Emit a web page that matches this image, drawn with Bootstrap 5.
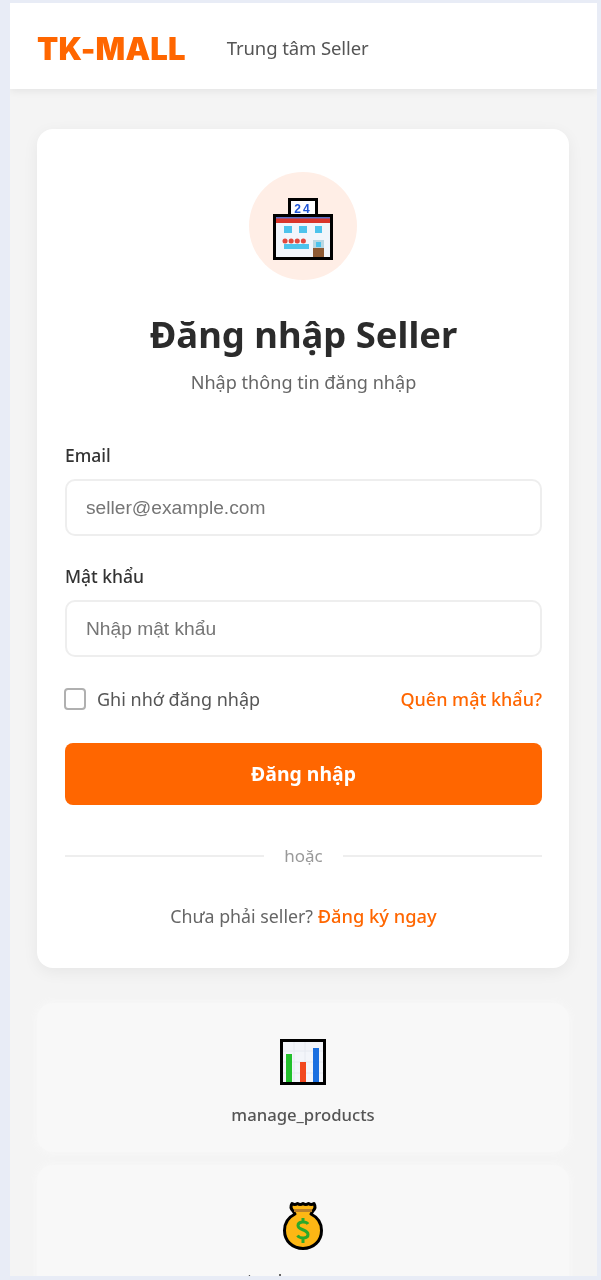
<!DOCTYPE html>
<html lang="vi">
<head>
<meta charset="utf-8">
<title>TK-MALL</title>
<link href="https://cdn.jsdelivr.net/npm/bootstrap@5.3.0/dist/css/bootstrap.min.css" rel="stylesheet">
<style>
html,body{height:1280px;overflow:hidden}
body{background:#e8ecf6;font-family:"Noto Sans",sans-serif;padding:3px 4px 4px 10px;color:#333}
.app-frame{height:1273px;background:#f4f4f4;overflow:hidden;filter:blur(.35px)}
.top-bar{height:86px;background:#fff;box-shadow:0 2px 8px rgba(0,0,0,.07);padding:4px 27px 0}
.brand-name{font-family:Inter,sans-serif;font-weight:900;font-size:31px;color:#f60;letter-spacing:.2px;line-height:1}
.brand-sub{font-size:18.5px;color:#555;margin-left:41px;letter-spacing:-.1px}
.content-area{padding:40px 28px 0 27px}
.login-box{background:#fff;border-radius:16px;box-shadow:0 4px 16px rgba(0,0,0,.06);height:839px;padding:43px 27px 0 28px}
.shop-disc{width:108px;height:108px;border-radius:50%;background:#ffeee6;margin:0 0 0 calc(50% - 55px);padding-top:5px}
.login-title{font-size:36.4px;font-weight:700;color:#2b2b2b;margin:30px 0 0;line-height:48px;text-align:center}
.login-sub{font-size:18.1px;color:#666;text-align:center;margin-top:11px;line-height:26px}
.field-label{font-size:17.5px;font-weight:500;color:#333;line-height:24px;margin-bottom:12px;display:block}
.form-block{margin-top:48px}
.field-gap{margin-bottom:28px}
.field-input{height:57px;border:2px solid #eee;border-radius:10px;padding:0 19px;font-family:"Liberation Sans",sans-serif;font-size:19.2px;box-shadow:none}
.field-input::placeholder{color:#757575;opacity:1}
.remember-row{margin-top:28px;height:28px}
.remember-box{width:22px;height:22px;border:2px solid #b0b0b0;border-radius:4px;background:#fff;margin:0 11px 0 -1px;flex:none}
.remember-label{font-size:18px;color:#555}
.accent-link{color:#f60;text-decoration:none;font-size:18px;font-weight:500}
.submit-btn{height:62px;background:#f60;border:0;border-radius:8px;color:#fff;font-size:19.4px;font-weight:700;margin-top:30px}
.divider-row{margin-top:40px}
.divider-line{height:2px;background:#eee;flex:1}
.divider-word{font-size:17px;color:#999;margin:0 20px;line-height:22px}
.signup-line{font-size:17.8px;color:#666;text-align:center;margin-top:36px;line-height:26px}
.signup-line .accent-link{font-size:18.3px}
.mini-box{background:#f8f8f8;border-radius:16px;box-shadow:0 0 6px 2px #f7f7f7;text-align:center;height:149px;padding-top:36px}
.mini-first{margin-top:35px}
.mini-box+.mini-box{margin-top:13px}
.mini-label{font-size:16.7px;font-weight:500;color:#555;line-height:22px;margin-top:19px}
</style>
</head>
<body>
<div class="app-frame">
  <header class="top-bar d-flex align-items-center">
    <span class="brand-name">TK-MALL</span>
    <span class="brand-sub">Trung tâm Seller</span>
  </header>
  <main class="content-area">
    <section class="login-box">
      <div class="shop-disc d-flex align-items-center justify-content-center">
        <svg width="60" height="62" viewBox="0 0 60 62">
          <rect x="1.500" y="17.500" width="57" height="43" fill="#f1f5fb" stroke="#000" stroke-width="3"/>
          <rect x="16.500" y="1.500" width="27" height="16" fill="#fff" stroke="#000" stroke-width="3"/>
          <text x="30" y="15" text-anchor="middle" font-family="Liberation Sans,sans-serif" font-weight="700" font-size="12" letter-spacing="2" fill="#1f55d8">24</text>
          <rect x="3" y="19" width="54" height="2" fill="#5a6fc8"/>
          <rect x="3" y="20.500" width="54" height="4.500" fill="#d9352b"/>
          <rect x="11" y="28" width="8" height="7" fill="#4dc3ec"/>
          <rect x="26" y="28" width="8" height="7" fill="#4dc3ec"/>
          <rect x="42" y="28" width="7" height="7" fill="#4dc3ec"/>
          <path d="M12 43h24" stroke="#e2483d" stroke-width="5" stroke-linecap="round" stroke-dasharray="0.1 6"/>
          <rect x="11" y="46" width="25" height="5" fill="#4dc3ec"/>
          <rect x="40" y="42" width="11" height="17" fill="#8d5a34"/>
          <rect x="40" y="42" width="11" height="8" fill="#b9d7e2"/>
          <rect x="43" y="44" width="5" height="5" fill="#4dc3ec"/>
        </svg>
      </div>
      <h1 class="login-title">Đăng nhập Seller</h1>
      <p class="login-sub mb-0">Nhập thông tin đăng nhập</p>
      <form class="form-block">
        <div class="field-gap">
          <label class="field-label" for="em">Email</label>
          <input id="em" type="text" class="form-control field-input" placeholder="seller@example.com">
        </div>
        <div>
          <label class="field-label" for="pw">Mật khẩu</label>
          <input id="pw" type="password" class="form-control field-input" placeholder="Nhập mật khẩu">
        </div>
        <div class="remember-row d-flex align-items-center justify-content-between">
          <div class="d-flex align-items-center">
            <input type="checkbox" class="form-check-input remember-box" id="rm">
            <label class="remember-label" for="rm">Ghi nhớ đăng nhập</label>
          </div>
          <a href="#" class="accent-link">Quên mật khẩu?</a>
        </div>
        <button type="button" class="btn submit-btn w-100">Đăng nhập</button>
      </form>
      <div class="divider-row d-flex align-items-center">
        <span class="divider-line"></span><span class="divider-word">hoặc</span><span class="divider-line"></span>
      </div>
      <p class="signup-line mb-0">Chưa phải seller? <a href="#" class="accent-link">Đăng ký ngay</a></p>
    </section>
    <section class="mini-box mini-first">
      <svg width="46" height="46" viewBox="0 0 46 46" class="d-block mx-auto">
        <rect x="1.500" y="1.500" width="43" height="43" fill="#f3f5fa" stroke="#000" stroke-width="3"/>
        <path d="M3 12h40M3 23h40M3 34h40M14 3v40M25 3v40" stroke="#e6e9f0" stroke-width="1"/>
        <rect x="6" y="15" width="6" height="28" fill="#22c02c"/>
        <rect x="20" y="23" width="6" height="20" fill="#f2481f"/>
        <rect x="33" y="9" width="6" height="34" fill="#1a6fe0"/>
      </svg>
      <div class="mini-label">manage_products</div>
    </section>
    <section class="mini-box">
      <svg width="40" height="49" viewBox="0 0 40 49" class="d-block mx-auto">
        <path d="M9 2.500c2 1.500 3.500 1.500 5.500 0 2 1.500 3.500 1.500 5.500 0 2 1.500 3.500 1.500 5.500 0 2 1.500 3.500 1.500 5.500 0 1.500 2.500 1 5.500-1 7.500l-2 3c6 3 10.500 9 10.500 16.500 0 10.500-8 18-18.500 18s-18.500-7.500-18.500-18c0-7.500 4.500-13.500 10.500-16.500l-2-3c-2-2-2.500-5-1-7.500z" fill="#fdb714" stroke="#000" stroke-width="3" stroke-linejoin="round"/>
        <path d="M11 9.500h18" stroke="#b9802a" stroke-width="3"/>
        <path d="M25 23c-2-3-10-3-10 1.500 0 5 10 3.500 10 9 0 4.500-8 4.500-10.500 1M20 17v4M20 38v4" fill="none" stroke="#2ba82b" stroke-width="3"/>
      </svg>
      <div class="mini-label">track_revenue</div>
    </section>
  </main>
</div>
</body>
</html>
